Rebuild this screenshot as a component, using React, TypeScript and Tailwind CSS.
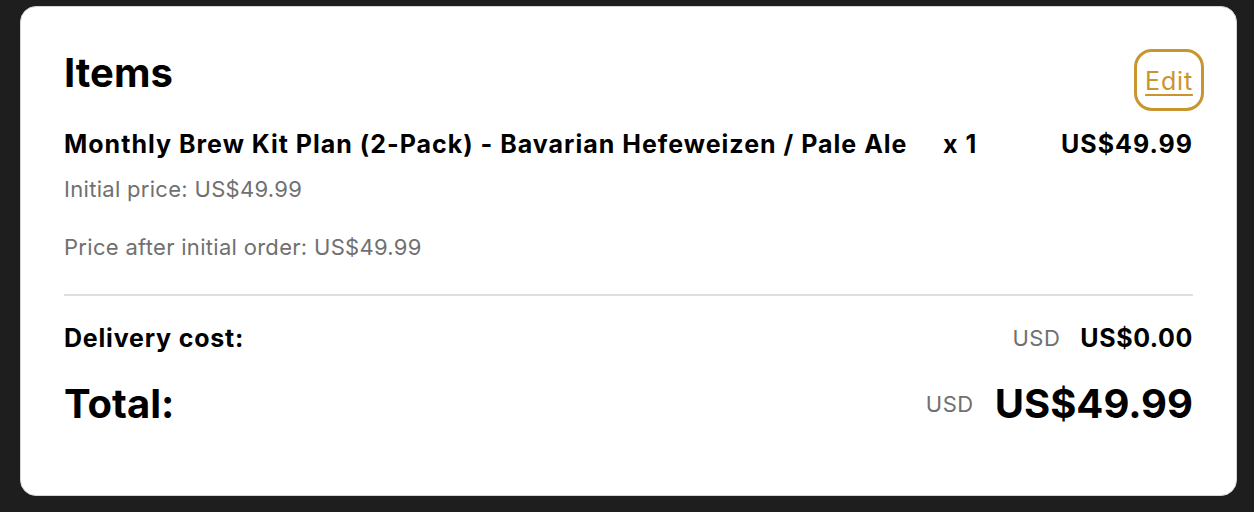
export default function App() {
  return (
    <div
      className="min-h-[512px] w-full bg-[#1e1e1e] pt-[6px] pl-[20px] pr-[17px]"
      style={{ fontFamily: "Inter, 'Noto Sans', sans-serif" }}
    >
      <section className="rounded-[16px] border border-[#d4d4d4] bg-white px-[43px] pt-[42px] pb-[67px] text-black">
        <div className="flex items-start justify-between">
          <h2 className="text-[40px] leading-[48px] font-bold">Items</h2>
          <button className="mr-[-11px] flex h-[62px] w-[70px] items-center justify-center rounded-[18px] border-[3px] border-[#c9952f] pt-[2px] text-[25px] leading-[30px] tracking-[0.8px] text-[#c9952f] underline decoration-2 underline-offset-[4px]">
            Edit
          </button>
        </div>

        <div className="mt-[18px] flex items-center text-[25px] leading-[30px] font-bold tracking-[1px]">
          <div className="flex-1">
            Monthly Brew Kit Plan (2-Pack) - Bavarian Hefeweizen / Pale Ale
          </div>
          <div className="w-[118px]">x 1</div>
          <div className="shrink-0 text-right">US$49.99</div>
        </div>

        <p className="mt-[16px] text-[22px] leading-[28px] tracking-[0.3px] text-[#707070]">
          Initial price: US$49.99
        </p>
        <p className="mt-[30px] text-[22px] leading-[28px] tracking-[0.3px] text-[#707070]">
          Price after initial order: US$49.99
        </p>

        <hr className="mt-[33px] border-t-2 border-[#dedede]" />

        <div className="mt-[27px] flex items-center justify-between">
          <span className="text-[25px] leading-[30px] font-bold tracking-[0.8px]">Delivery cost:</span>
          <div className="flex items-center gap-[20px]">
            <span className="text-[22px] leading-[28px] tracking-[0.5px] text-[#707070]">USD</span>
            <span className="text-[25px] leading-[30px] font-bold tracking-[0.6px]">US$0.00</span>
          </div>
        </div>

        <div className="mt-[27px] flex items-center justify-between">
          <span className="text-[40px] leading-[48px] font-bold">Total:</span>
          <div className="flex items-center gap-[21px]">
            <span className="text-[22px] leading-[28px] tracking-[0.5px] text-[#707070]">USD</span>
            <span className="text-[40px] leading-[48px] font-bold">US$49.99</span>
          </div>
        </div>
      </section>
    </div>
  );
}
